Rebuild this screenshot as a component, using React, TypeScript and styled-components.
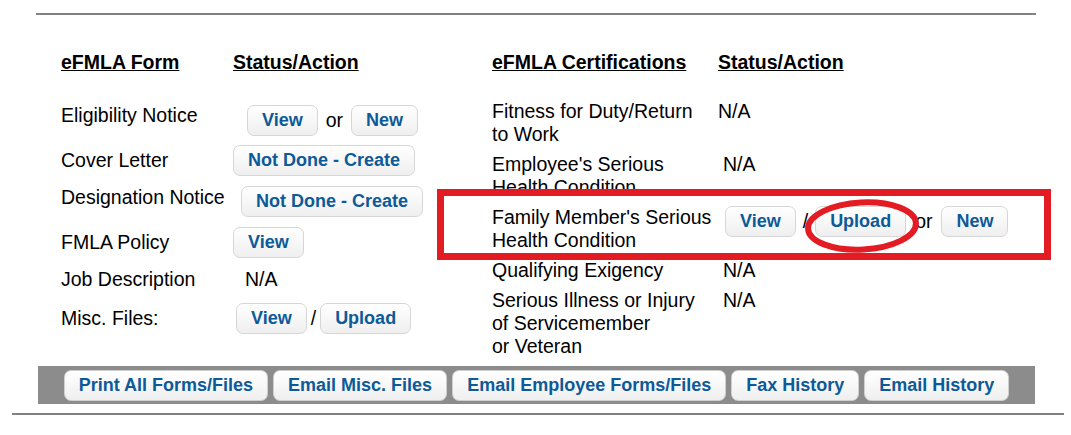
import styled, { createGlobalStyle } from 'styled-components';

const GlobalStyle = createGlobalStyle`
  html, body {
    margin: 0;
    padding: 0;
    background: #ffffff;
  }
  body {
    font-family: "Liberation Sans", Arial, sans-serif;
    color: #000000;
  }
`;

const blue = '#0d5a99';
const rule = '#808080';
const red = '#e31b23';

export default function App() {
  return (
    <Page>
      <GlobalStyle />
      <TopRule />
      <Columns>
        <FormTable>
          <HeadRow $cols="172px">
            <HeadCell>eFMLA Form</HeadCell>
            <HeadCell>Status/Action</HeadCell>
          </HeadRow>

          <FormRow $mt={21}>
            <Label>Eligibility Notice</Label>
            <Actions $indent={14} $drop={5} $gap={8}>
              <Button>View</Button>
              <Sep>or</Sep>
              <Button>New</Button>
            </Actions>
          </FormRow>

          <FormRow $mt={9}>
            <Label>Cover Letter</Label>
            <Actions>
              <Button>Not Done - Create</Button>
            </Actions>
          </FormRow>

          <FormRow $mt={2}>
            <Label>Designation Notice</Label>
            <Actions $indent={8} $drop={4}>
              <Button>Not Done - Create</Button>
            </Actions>
          </FormRow>

          <FormRow $mt={10}>
            <Label>FMLA Policy</Label>
            <Actions>
              <Button>View</Button>
            </Actions>
          </FormRow>

          <FormRow $mt={6}>
            <Label>Job Description</Label>
            <Actions $indent={12}>
              <Sep>N/A</Sep>
            </Actions>
          </FormRow>

          <FormRow $mt={8}>
            <Label>Misc. Files:</Label>
            <Actions $indent={3} $gap={4}>
              <Button>View</Button>
              <Sep>/</Sep>
              <Button>Upload</Button>
            </Actions>
          </FormRow>
        </FormTable>

        <CertTable>
          <HeadRow $cols="226px">
            <HeadCell>eFMLA Certifications</HeadCell>
            <HeadCell>Status/Action</HeadCell>
          </HeadRow>

          <CertRows>
            <CertRow>
              <Label>
                Fitness for Duty/Return
                <br />
                to Work
              </Label>
              <Actions>
                <Sep>N/A</Sep>
              </Actions>
            </CertRow>

            <CertRow>
              <Label>
                Employee's Serious
                <br />
                Health Condition
              </Label>
              <Actions $indent={5}>
                <Sep>N/A</Sep>
              </Actions>
            </CertRow>

            <CertRow>
              <Label>
                Family Member's Serious
                <br />
                Health Condition
              </Label>
              <Actions $indent={7} $gap={7}>
                <Button>View</Button>
                <Sep>/</Sep>
                <Button>Upload</Button>
                <Sep $pad={2}>or</Sep>
                <Button>New</Button>
              </Actions>
            </CertRow>

            <CertRow>
              <Label>Qualifying Exigency</Label>
              <Actions $indent={5}>
                <Sep>N/A</Sep>
              </Actions>
            </CertRow>

            <CertRow>
              <Label>
                Serious Illness or Injury
                <br />
                of Servicemember
                <br />
                or Veteran
              </Label>
              <Actions $indent={5}>
                <Sep>N/A</Sep>
              </Actions>
            </CertRow>
          </CertRows>
        </CertTable>
      </Columns>

      <ActionBar>
        <Button>Print All Forms/Files</Button>
        <Button>Email Misc. Files</Button>
        <Button>Email Employee Forms/Files</Button>
        <Button>Fax History</Button>
        <Button>Email History</Button>
      </ActionBar>

      <BottomRule />

      {/* hand-drawn markup laid over the screenshot */}
      <Highlight />
      <Circle viewBox="0 0 118 56" width="118" height="56">
        <ellipse cx="59" cy="28" rx="54" ry="23.5" fill="none" stroke={red} strokeWidth="6" />
      </Circle>
    </Page>
  );
}

const Page = styled.div`
  position: relative;
  width: 1071px;
  padding-top: 13px;
`;

const TopRule = styled.div`
  margin-left: 36px;
  width: 1000px;
  height: 2px;
  background: ${rule};
`;

const BottomRule = styled.div`
  margin-top: 9px;
  margin-left: 12px;
  width: 1052px;
  height: 2px;
  background: ${rule};
`;

const Columns = styled.div`
  display: flex;
  align-items: flex-start;
  margin-top: 36px;
  padding-left: 61px;
`;

const FormTable = styled.div`
  width: 431px;
  display: flex;
  flex-direction: column;
`;

const CertTable = styled.div`
  flex: 1;
  display: flex;
  flex-direction: column;
`;

const HeadRow = styled.div<{ $cols: string }>`
  display: grid;
  grid-template-columns: ${(p) => p.$cols} auto;
`;

const HeadCell = styled.div`
  font-size: 19.5px;
  line-height: 23px;
  font-weight: bold;
  text-decoration: underline;
  white-space: nowrap;
`;

const Label = styled.div`
  font-size: 19.5px;
  line-height: 23px;
  white-space: nowrap;
`;

const FormRow = styled.div<{ $mt: number }>`
  display: grid;
  grid-template-columns: 172px auto;
  align-items: center;
  min-height: 31px;
  margin-top: ${(p) => p.$mt}px;
`;

const CertRows = styled.div`
  display: flex;
  flex-direction: column;
  gap: 7px;
  margin-top: 26px;
`;

const CertRow = styled.div`
  display: grid;
  grid-template-columns: 226px auto;
  align-items: start;
`;

const Actions = styled.div<{ $indent?: number; $drop?: number; $gap?: number }>`
  display: flex;
  align-items: center;
  gap: ${(p) => p.$gap ?? 6}px;
  padding-left: ${(p) => p.$indent ?? 0}px;
  padding-top: ${(p) => (p.$drop ?? 0) * 2}px;
`;

const Sep = styled.span<{ $pad?: number }>`
  font-size: 19.5px;
  line-height: 23px;
  white-space: nowrap;
  padding: 0 ${(p) => p.$pad ?? 0}px;
`;

const Button = styled.button`
  font-family: "Liberation Sans", Arial, sans-serif;
  font-size: 18px;
  line-height: 21px;
  font-weight: bold;
  color: ${blue};
  padding: 4px 14px;
  margin: 0;
  border: 1px solid #d6d6d6;
  border-radius: 7px;
  background: linear-gradient(#ffffff, #efefef);
  white-space: nowrap;
  cursor: pointer;
`;

const ActionBar = styled.div`
  margin-top: 8px;
  margin-left: 38px;
  width: 997px;
  height: 38px;
  background: #8c8c8c;
  display: flex;
  align-items: center;
  justify-content: center;
  gap: 5px;

  ${Button} {
    border-color: #cfcfcf;
  }
`;

const Highlight = styled.div`
  position: absolute;
  left: 437px;
  top: 189px;
  width: 614px;
  height: 71px;
  box-sizing: border-box;
  border: 7px solid ${red};
  pointer-events: none;
`;

const Circle = styled.svg`
  position: absolute;
  left: 803px;
  top: 198px;
  transform: rotate(-3deg);
  pointer-events: none;
`;
